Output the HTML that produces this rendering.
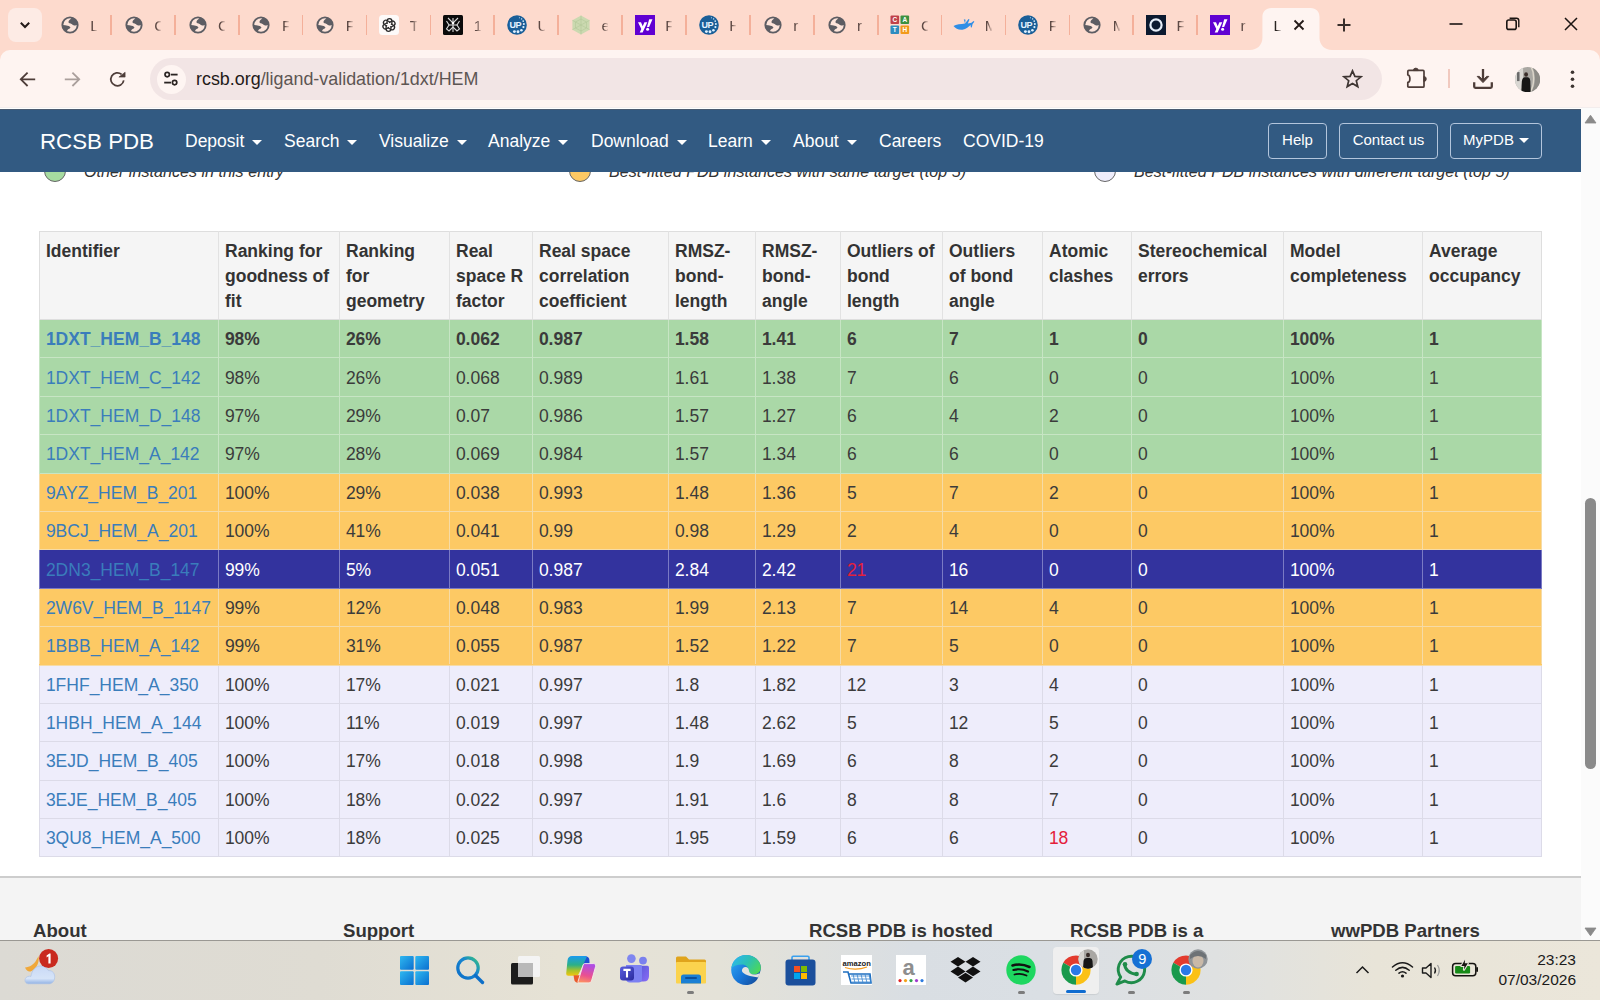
<!DOCTYPE html>
<html><head><meta charset="utf-8">
<style>
*{box-sizing:border-box;margin:0;padding:0}
html,body{width:1600px;height:1000px;overflow:hidden;background:#fff;font-family:"Liberation Sans",sans-serif}
.abs{position:absolute}
#tabbar{position:absolute;left:0;top:0;width:1600px;height:62px;background:#fddacd}
#toolbar{position:absolute;left:0;top:49.5px;width:1600px;height:58.5px;background:#fef4f1;border-radius:10px 10px 0 0}
#page{position:absolute;left:0;top:108px;width:1581px;height:832px;background:#fff;overflow:hidden}
#nav{position:absolute;left:0;top:1px;width:1581px;height:63px;background:#325a82;border-top:1px solid #4a5a70}
#sb{position:absolute;left:1581px;top:108px;width:19px;height:832px;background:#fbfbfb}
#taskbar{position:absolute;left:0;top:940px;width:1600px;height:60px;background:#e9e6df}
.th{position:absolute;font-size:17.5px;line-height:25px;font-weight:bold;color:#333;white-space:nowrap}
.td{position:absolute;font-size:17.5px;line-height:25px;color:#3b3b3b;white-space:nowrap}
.td.lk{color:#3a7dbb}
.td.bold{font-weight:bold}
.td.wt{color:#fff}
.td.red{color:#e4203a}
.tch{position:absolute;top:16.6px;font-size:15.3px;line-height:18px;color:#5e4a45;width:7px;overflow:hidden;white-space:nowrap;-webkit-mask-image:linear-gradient(90deg,#000 0%,#000 35%,rgba(0,0,0,0.15) 100%)}
.nv{position:absolute;top:19.3px;font-size:17.5px;line-height:25px;color:#fff;white-space:nowrap}
.car{display:inline-block;width:0;height:0;border-left:5px solid transparent;border-right:5px solid transparent;border-top:5px solid #fff;vertical-align:middle;margin-left:8px;position:relative;top:-0.5px}
.btn{position:absolute;top:13.2px;height:36px;border:1.5px solid #b3c5dc;border-radius:4px;color:#fff;font-size:15px;line-height:31px;text-align:center;white-space:nowrap}
.leg{position:absolute;font-style:italic;font-size:16.15px;color:#333;white-space:nowrap;line-height:25px}
.dot{position:absolute;width:22px;height:22px;border-radius:50%;border:1px solid #666}
.ft{position:absolute;font-size:18.6px;line-height:22px;font-weight:bold;color:#333;white-space:nowrap}
</style></head><body>
<div id="tabbar"><div class="abs" style="left:8px;top:7.5px;width:34px;height:34.5px;border-radius:8px;background:#fdebe5"></div>
<svg class="abs" style="left:19px;top:19px" width="12" height="12" viewBox="0 0 12 12"><path d="M1.8 3.8 L6 8 L10.2 3.8" fill="none" stroke="#231a18" stroke-width="2"/></svg>
<div class="abs" style="left:59.75px;top:15px;width:20px;height:20px"><svg width="20" height="20" viewBox="0 0 20 20"><defs><clipPath id="gc"><circle cx="10" cy="10" r="7.8"/></clipPath></defs><circle cx="10" cy="10" r="7.6" fill="#fde4da"/><g clip-path="url(#gc)" fill="#5d5d63"><path d="M11.3 0 V3.2 C10 4.4 8.2 6 8.5 7.3 C8.8 8.4 10.4 8.4 11.6 9 C12.6 9.6 13.4 10.5 14.5 10.4 C15.6 10.3 16.4 9.9 18 9.9 H20 V0 Z"/><path d="M0 10.1 H2.7 C4.5 10.2 6.2 10.3 7.6 10.7 C9.2 11.1 10.6 11.8 10.4 12.6 C10.2 13.4 9.3 13.7 8.6 14 C7.6 14.5 7.2 15.3 7 16.4 L6 20 H0 Z"/></g><circle cx="10" cy="10" r="7.65" fill="none" stroke="#5d5d63" stroke-width="1.9"/></svg></div>
<div class="tch" style="left:90.25px">L</div>
<div class="abs" style="left:110.00px;top:15px;width:1.8px;height:19.5px;background:#f4b09a"></div>
<div class="abs" style="left:123.65px;top:15px;width:20px;height:20px"><svg width="20" height="20" viewBox="0 0 20 20"><defs><clipPath id="gc"><circle cx="10" cy="10" r="7.8"/></clipPath></defs><circle cx="10" cy="10" r="7.6" fill="#fde4da"/><g clip-path="url(#gc)" fill="#5d5d63"><path d="M11.3 0 V3.2 C10 4.4 8.2 6 8.5 7.3 C8.8 8.4 10.4 8.4 11.6 9 C12.6 9.6 13.4 10.5 14.5 10.4 C15.6 10.3 16.4 9.9 18 9.9 H20 V0 Z"/><path d="M0 10.1 H2.7 C4.5 10.2 6.2 10.3 7.6 10.7 C9.2 11.1 10.6 11.8 10.4 12.6 C10.2 13.4 9.3 13.7 8.6 14 C7.6 14.5 7.2 15.3 7 16.4 L6 20 H0 Z"/></g><circle cx="10" cy="10" r="7.65" fill="none" stroke="#5d5d63" stroke-width="1.9"/></svg></div>
<div class="tch" style="left:154.15px">C</div>
<div class="abs" style="left:173.90px;top:15px;width:1.8px;height:19.5px;background:#f4b09a"></div>
<div class="abs" style="left:187.55px;top:15px;width:20px;height:20px"><svg width="20" height="20" viewBox="0 0 20 20"><defs><clipPath id="gc"><circle cx="10" cy="10" r="7.8"/></clipPath></defs><circle cx="10" cy="10" r="7.6" fill="#fde4da"/><g clip-path="url(#gc)" fill="#5d5d63"><path d="M11.3 0 V3.2 C10 4.4 8.2 6 8.5 7.3 C8.8 8.4 10.4 8.4 11.6 9 C12.6 9.6 13.4 10.5 14.5 10.4 C15.6 10.3 16.4 9.9 18 9.9 H20 V0 Z"/><path d="M0 10.1 H2.7 C4.5 10.2 6.2 10.3 7.6 10.7 C9.2 11.1 10.6 11.8 10.4 12.6 C10.2 13.4 9.3 13.7 8.6 14 C7.6 14.5 7.2 15.3 7 16.4 L6 20 H0 Z"/></g><circle cx="10" cy="10" r="7.65" fill="none" stroke="#5d5d63" stroke-width="1.9"/></svg></div>
<div class="tch" style="left:218.05px">C</div>
<div class="abs" style="left:237.80px;top:15px;width:1.8px;height:19.5px;background:#f4b09a"></div>
<div class="abs" style="left:251.45px;top:15px;width:20px;height:20px"><svg width="20" height="20" viewBox="0 0 20 20"><defs><clipPath id="gc"><circle cx="10" cy="10" r="7.8"/></clipPath></defs><circle cx="10" cy="10" r="7.6" fill="#fde4da"/><g clip-path="url(#gc)" fill="#5d5d63"><path d="M11.3 0 V3.2 C10 4.4 8.2 6 8.5 7.3 C8.8 8.4 10.4 8.4 11.6 9 C12.6 9.6 13.4 10.5 14.5 10.4 C15.6 10.3 16.4 9.9 18 9.9 H20 V0 Z"/><path d="M0 10.1 H2.7 C4.5 10.2 6.2 10.3 7.6 10.7 C9.2 11.1 10.6 11.8 10.4 12.6 C10.2 13.4 9.3 13.7 8.6 14 C7.6 14.5 7.2 15.3 7 16.4 L6 20 H0 Z"/></g><circle cx="10" cy="10" r="7.65" fill="none" stroke="#5d5d63" stroke-width="1.9"/></svg></div>
<div class="tch" style="left:281.95px">F</div>
<div class="abs" style="left:301.70px;top:15px;width:1.8px;height:19.5px;background:#f4b09a"></div>
<div class="abs" style="left:315.35px;top:15px;width:20px;height:20px"><svg width="20" height="20" viewBox="0 0 20 20"><defs><clipPath id="gc"><circle cx="10" cy="10" r="7.8"/></clipPath></defs><circle cx="10" cy="10" r="7.6" fill="#fde4da"/><g clip-path="url(#gc)" fill="#5d5d63"><path d="M11.3 0 V3.2 C10 4.4 8.2 6 8.5 7.3 C8.8 8.4 10.4 8.4 11.6 9 C12.6 9.6 13.4 10.5 14.5 10.4 C15.6 10.3 16.4 9.9 18 9.9 H20 V0 Z"/><path d="M0 10.1 H2.7 C4.5 10.2 6.2 10.3 7.6 10.7 C9.2 11.1 10.6 11.8 10.4 12.6 C10.2 13.4 9.3 13.7 8.6 14 C7.6 14.5 7.2 15.3 7 16.4 L6 20 H0 Z"/></g><circle cx="10" cy="10" r="7.65" fill="none" stroke="#5d5d63" stroke-width="1.9"/></svg></div>
<div class="tch" style="left:345.85px">F</div>
<div class="abs" style="left:365.60px;top:15px;width:1.8px;height:19.5px;background:#f4b09a"></div>
<div class="abs" style="left:379.25px;top:15px;width:20px;height:20px"><svg width="20" height="20" viewBox="0 0 20 20"><rect x="0" y="0" width="20" height="20" rx="3.5" fill="#fdfaf9"/><g fill="none" stroke="#2a2a2a" stroke-width="1.3"><path d="M8.1 8.9 V6.1 A2.4 2.4 0 0 1 12.9 6.1 V9.6" transform="rotate(0 10 10)"/><path d="M8.1 8.9 V6.1 A2.4 2.4 0 0 1 12.9 6.1 V9.6" transform="rotate(60 10 10)"/><path d="M8.1 8.9 V6.1 A2.4 2.4 0 0 1 12.9 6.1 V9.6" transform="rotate(120 10 10)"/><path d="M8.1 8.9 V6.1 A2.4 2.4 0 0 1 12.9 6.1 V9.6" transform="rotate(180 10 10)"/><path d="M8.1 8.9 V6.1 A2.4 2.4 0 0 1 12.9 6.1 V9.6" transform="rotate(240 10 10)"/><path d="M8.1 8.9 V6.1 A2.4 2.4 0 0 1 12.9 6.1 V9.6" transform="rotate(300 10 10)"/></g></svg></div>
<div class="tch" style="left:409.75px">T</div>
<div class="abs" style="left:429.50px;top:15px;width:1.8px;height:19.5px;background:#f4b09a"></div>
<div class="abs" style="left:443.15px;top:15px;width:20px;height:20px"><svg width="20" height="20" viewBox="0 0 20 20"><rect x="0" y="0" width="20" height="20" rx="1.5" fill="#0b0b0b"/><g stroke="#d8d8d8" stroke-width="1.1" fill="none"><path d="M10 3 V17"/><path d="M5 3 L10 8 L15 3"/><path d="M3.5 6 L6 10 L3.5 14 L6 16 L10 12 L14 16 L16.5 14 L14 10 L16.5 6"/><path d="M6 10 H14"/></g><circle cx="10" cy="8" r="1.3" fill="#fff"/></svg></div>
<div class="tch" style="left:473.65px">1</div>
<div class="abs" style="left:493.40px;top:15px;width:1.8px;height:19.5px;background:#f4b09a"></div>
<div class="abs" style="left:507.05px;top:15px;width:20px;height:20px"><svg width="20" height="20" viewBox="0 0 20 20"><circle cx="10" cy="10" r="9.8" fill="#1a5f98"/><text x="2.4" y="13.2" font-family="Liberation Sans" font-weight="bold" font-size="9" letter-spacing="-0.4" fill="#e6f3ff">UP</text><g fill="#dff0ff"><circle cx="7.4" cy="16.6" r="1.45"/><circle cx="11" cy="16.8" r="1.45"/><circle cx="14.4" cy="15.2" r="1.3"/><circle cx="16.4" cy="12.1" r="1.1"/><circle cx="16.9" cy="9" r="1"/><circle cx="16.2" cy="6.1" r="0.85"/><circle cx="14.6" cy="3.9" r="0.7"/><circle cx="12.4" cy="2.8" r="0.55"/></g></svg></div>
<div class="tch" style="left:537.55px">U</div>
<div class="abs" style="left:557.30px;top:15px;width:1.8px;height:19.5px;background:#f4b09a"></div>
<div class="abs" style="left:570.95px;top:15px;width:20px;height:20px"><svg width="20" height="20" viewBox="0 0 20 20"><polygon points="10,0.6 18.6,5.3 18.6,14.7 10,19.4 1.4,14.7 1.4,5.3" fill="#cbd9b0"/><g stroke="#b4c898" stroke-width="0.6" fill="none"><path d="M1.4 5.3 L18.6 14.7 M18.6 5.3 L1.4 14.7 M10 0.6 V19.4"/><polygon points="10,4 15.5,7 15.5,13 10,16 4.5,13 4.5,7"/></g></svg></div>
<div class="tch" style="left:601.45px">e</div>
<div class="abs" style="left:621.20px;top:15px;width:1.8px;height:19.5px;background:#f4b09a"></div>
<div class="abs" style="left:634.85px;top:15px;width:20px;height:20px"><svg width="20" height="20" viewBox="0 0 20 20"><rect x="0" y="0" width="20" height="20" fill="#6001d2"/><path d="M3 7.2 H6 L7.7 11.3 L9.4 7.2 H12.3 L7.6 17.6 H4.7 L6.3 14.1 Z" fill="#fff"/><path d="M14.2 4.3 H17.5 L14.1 12.1 H12 Z" fill="#fff"/><circle cx="12.6" cy="14.2" r="1.5" fill="#fff"/></svg></div>
<div class="tch" style="left:665.35px">F</div>
<div class="abs" style="left:685.10px;top:15px;width:1.8px;height:19.5px;background:#f4b09a"></div>
<div class="abs" style="left:698.75px;top:15px;width:20px;height:20px"><svg width="20" height="20" viewBox="0 0 20 20"><circle cx="10" cy="10" r="9.8" fill="#1a5f98"/><text x="2.4" y="13.2" font-family="Liberation Sans" font-weight="bold" font-size="9" letter-spacing="-0.4" fill="#e6f3ff">UP</text><g fill="#dff0ff"><circle cx="7.4" cy="16.6" r="1.45"/><circle cx="11" cy="16.8" r="1.45"/><circle cx="14.4" cy="15.2" r="1.3"/><circle cx="16.4" cy="12.1" r="1.1"/><circle cx="16.9" cy="9" r="1"/><circle cx="16.2" cy="6.1" r="0.85"/><circle cx="14.6" cy="3.9" r="0.7"/><circle cx="12.4" cy="2.8" r="0.55"/></g></svg></div>
<div class="tch" style="left:729.25px">H</div>
<div class="abs" style="left:749.00px;top:15px;width:1.8px;height:19.5px;background:#f4b09a"></div>
<div class="abs" style="left:762.65px;top:15px;width:20px;height:20px"><svg width="20" height="20" viewBox="0 0 20 20"><defs><clipPath id="gc"><circle cx="10" cy="10" r="7.8"/></clipPath></defs><circle cx="10" cy="10" r="7.6" fill="#fde4da"/><g clip-path="url(#gc)" fill="#5d5d63"><path d="M11.3 0 V3.2 C10 4.4 8.2 6 8.5 7.3 C8.8 8.4 10.4 8.4 11.6 9 C12.6 9.6 13.4 10.5 14.5 10.4 C15.6 10.3 16.4 9.9 18 9.9 H20 V0 Z"/><path d="M0 10.1 H2.7 C4.5 10.2 6.2 10.3 7.6 10.7 C9.2 11.1 10.6 11.8 10.4 12.6 C10.2 13.4 9.3 13.7 8.6 14 C7.6 14.5 7.2 15.3 7 16.4 L6 20 H0 Z"/></g><circle cx="10" cy="10" r="7.65" fill="none" stroke="#5d5d63" stroke-width="1.9"/></svg></div>
<div class="tch" style="left:793.15px">r</div>
<div class="abs" style="left:812.90px;top:15px;width:1.8px;height:19.5px;background:#f4b09a"></div>
<div class="abs" style="left:826.55px;top:15px;width:20px;height:20px"><svg width="20" height="20" viewBox="0 0 20 20"><defs><clipPath id="gc"><circle cx="10" cy="10" r="7.8"/></clipPath></defs><circle cx="10" cy="10" r="7.6" fill="#fde4da"/><g clip-path="url(#gc)" fill="#5d5d63"><path d="M11.3 0 V3.2 C10 4.4 8.2 6 8.5 7.3 C8.8 8.4 10.4 8.4 11.6 9 C12.6 9.6 13.4 10.5 14.5 10.4 C15.6 10.3 16.4 9.9 18 9.9 H20 V0 Z"/><path d="M0 10.1 H2.7 C4.5 10.2 6.2 10.3 7.6 10.7 C9.2 11.1 10.6 11.8 10.4 12.6 C10.2 13.4 9.3 13.7 8.6 14 C7.6 14.5 7.2 15.3 7 16.4 L6 20 H0 Z"/></g><circle cx="10" cy="10" r="7.65" fill="none" stroke="#5d5d63" stroke-width="1.9"/></svg></div>
<div class="tch" style="left:857.05px">r</div>
<div class="abs" style="left:876.80px;top:15px;width:1.8px;height:19.5px;background:#f4b09a"></div>
<div class="abs" style="left:890.45px;top:15px;width:20px;height:20px"><svg width="20" height="20" viewBox="0 0 20 20"><rect x="0.5" y="0.5" width="8.6" height="8.6" rx="1" fill="#c0414a"/><rect x="10.5" y="0.5" width="8.6" height="8.6" rx="1" fill="#3d9140"/><rect x="0.5" y="10.5" width="8.6" height="8.6" rx="1" fill="#2d8cc0"/><rect x="10.5" y="10.5" width="8.6" height="8.6" rx="1" fill="#f29a1a"/><g font-family="Liberation Sans" font-weight="bold" font-size="6.5" fill="#fff"><text x="2.6" y="7.2">C</text><text x="12.6" y="7.2">A</text><text x="2.8" y="17.2">T</text><text x="12.6" y="17.2">H</text></g></svg></div>
<div class="tch" style="left:920.95px">C</div>
<div class="abs" style="left:940.70px;top:15px;width:1.8px;height:19.5px;background:#f4b09a"></div>
<div class="abs" style="left:952.35px;top:15px;width:24px;height:20px"><svg width="24" height="20" viewBox="0 0 24 20"><path d="M1.5 11 C4 9.5 9 9.2 13 8.6 L16.5 4 L17.5 4.6 L15.8 8.4 L19.5 7.8 L21.5 6 L22.4 6.8 L20.6 9 L19.8 12.5 L18.8 12.2 L18.6 10 C17 11.6 14 14.2 10.5 14.8 C6.5 15.2 3.5 13.6 1.5 11 Z" fill="#2f8ee6"/><path d="M13 8.6 L11.8 4.2 L13.6 4.8 Z" fill="#2f8ee6"/></svg></div>
<div class="tch" style="left:984.85px">M</div>
<div class="abs" style="left:1004.60px;top:15px;width:1.8px;height:19.5px;background:#f4b09a"></div>
<div class="abs" style="left:1018.25px;top:15px;width:20px;height:20px"><svg width="20" height="20" viewBox="0 0 20 20"><circle cx="10" cy="10" r="9.8" fill="#1a5f98"/><text x="2.4" y="13.2" font-family="Liberation Sans" font-weight="bold" font-size="9" letter-spacing="-0.4" fill="#e6f3ff">UP</text><g fill="#dff0ff"><circle cx="7.4" cy="16.6" r="1.45"/><circle cx="11" cy="16.8" r="1.45"/><circle cx="14.4" cy="15.2" r="1.3"/><circle cx="16.4" cy="12.1" r="1.1"/><circle cx="16.9" cy="9" r="1"/><circle cx="16.2" cy="6.1" r="0.85"/><circle cx="14.6" cy="3.9" r="0.7"/><circle cx="12.4" cy="2.8" r="0.55"/></g></svg></div>
<div class="tch" style="left:1048.75px">F</div>
<div class="abs" style="left:1068.50px;top:15px;width:1.8px;height:19.5px;background:#f4b09a"></div>
<div class="abs" style="left:1082.15px;top:15px;width:20px;height:20px"><svg width="20" height="20" viewBox="0 0 20 20"><defs><clipPath id="gc"><circle cx="10" cy="10" r="7.8"/></clipPath></defs><circle cx="10" cy="10" r="7.6" fill="#fde4da"/><g clip-path="url(#gc)" fill="#5d5d63"><path d="M11.3 0 V3.2 C10 4.4 8.2 6 8.5 7.3 C8.8 8.4 10.4 8.4 11.6 9 C12.6 9.6 13.4 10.5 14.5 10.4 C15.6 10.3 16.4 9.9 18 9.9 H20 V0 Z"/><path d="M0 10.1 H2.7 C4.5 10.2 6.2 10.3 7.6 10.7 C9.2 11.1 10.6 11.8 10.4 12.6 C10.2 13.4 9.3 13.7 8.6 14 C7.6 14.5 7.2 15.3 7 16.4 L6 20 H0 Z"/></g><circle cx="10" cy="10" r="7.65" fill="none" stroke="#5d5d63" stroke-width="1.9"/></svg></div>
<div class="tch" style="left:1112.65px">M</div>
<div class="abs" style="left:1132.40px;top:15px;width:1.8px;height:19.5px;background:#f4b09a"></div>
<div class="abs" style="left:1146.05px;top:15px;width:20px;height:20px"><svg width="20" height="20" viewBox="0 0 20 20"><rect x="0" y="0" width="20" height="20" fill="#0c1a30"/><circle cx="10" cy="10" r="5.6" fill="none" stroke="#e6eef8" stroke-width="2.2"/></svg></div>
<div class="tch" style="left:1176.55px">F</div>
<div class="abs" style="left:1196.30px;top:15px;width:1.8px;height:19.5px;background:#f4b09a"></div>
<div class="abs" style="left:1209.95px;top:15px;width:20px;height:20px"><svg width="20" height="20" viewBox="0 0 20 20"><rect x="0" y="0" width="20" height="20" fill="#6001d2"/><path d="M3 7.2 H6 L7.7 11.3 L9.4 7.2 H12.3 L7.6 17.6 H4.7 L6.3 14.1 Z" fill="#fff"/><path d="M14.2 4.3 H17.5 L14.1 12.1 H12 Z" fill="#fff"/><circle cx="12.6" cy="14.2" r="1.5" fill="#fff"/></svg></div>
<div class="tch" style="left:1240.45px">r</div>
<svg class="abs" style="left:1250px;top:8px" width="82" height="42" viewBox="0 0 82 42"><path d="M0 42 C7 42 12.4 37 12.4 30 L12.4 9 C12.4 3.5 15.9 0 21.4 0 L60.5 0 C66 0 69.5 3.5 69.5 9 L69.5 30 C69.5 37 74.9 42 81.9 42 Z" fill="#fef4f1"/></svg>
<div class="tch" style="left:1273.5px;color:#2a2422;opacity:1">L</div>
<svg class="abs" style="left:1293px;top:19px" width="12" height="12" viewBox="0 0 12 12"><path d="M1.5 1.5 L10.5 10.5 M10.5 1.5 L1.5 10.5" stroke="#231a18" stroke-width="1.8"/></svg>
<svg class="abs" style="left:1336px;top:17px" width="16" height="16" viewBox="0 0 16 16"><path d="M8 1.5 V14.5 M1.5 8 H14.5" stroke="#3a2e2b" stroke-width="2"/></svg>
<svg class="abs" style="left:1446px;top:14px" width="20" height="20" viewBox="0 0 20 20"><path d="M3.5 10 H16.5" stroke="#1a1412" stroke-width="1.6"/></svg>
<svg class="abs" style="left:1503px;top:14px" width="20" height="20" viewBox="0 0 20 20"><rect x="3.8" y="6" width="9.4" height="9.4" rx="2" fill="none" stroke="#1a1412" stroke-width="1.6"/><path d="M6.6 4.2 H13.4 Q15.8 4.2 15.8 6.6 V13.2" fill="none" stroke="#1a1412" stroke-width="1.4"/></svg>
<svg class="abs" style="left:1561px;top:14px" width="20" height="20" viewBox="0 0 20 20"><path d="M4 4 L16 16 M16 4 L4 16" stroke="#1a1412" stroke-width="1.5"/></svg></div>
<div id="toolbar"></div>
<div class="abs" style="left:0;top:107px;width:1600px;height:1px;background:#f3eded"></div>
<svg class="abs" style="left:17px;top:69px" width="21" height="21" viewBox="0 0 21 21"><path d="M18.2 10.3 H4.4 M10.6 3.6 L3.8 10.3 L10.6 17" fill="none" stroke="#4e3d39" stroke-width="1.8"/></svg>
<svg class="abs" style="left:62px;top:69px" width="21" height="21" viewBox="0 0 21 21"><path d="M2.8 10.3 H16.6 M10.4 3.6 L17.2 10.3 L10.4 17" fill="none" stroke="#aa9f9c" stroke-width="1.8"/></svg>
<svg class="abs" style="left:107px;top:69px" width="21" height="21" viewBox="0 0 21 21"><path d="M16.75 11.4 A6.5 6.5 0 1 1 14.6 5.4" fill="none" stroke="#4e3d39" stroke-width="1.75"/><path d="M11.9 8.1 L18.1 8.1 L18.1 3.2 Z" fill="#4e3d39" stroke="#4e3d39" stroke-width="0.6" stroke-linejoin="round"/></svg>
<div class="abs" style="left:150px;top:58px;width:1232px;height:41.5px;border-radius:21px;background:#f2e5e5"></div>
<div class="abs" style="left:156.5px;top:64.5px;width:29px;height:29px;border-radius:50%;background:#fef5f2"></div>
<svg class="abs" style="left:161px;top:69px" width="20" height="20" viewBox="0 0 20 20"><circle cx="6.2" cy="5.6" r="2.2" fill="none" stroke="#2a2422" stroke-width="1.7"/><path d="M9.8 5.6 H16.6" stroke="#2a2422" stroke-width="1.8"/><circle cx="13.6" cy="13.6" r="2.2" fill="none" stroke="#2a2422" stroke-width="1.7"/><path d="M3.2 13.6 H10" stroke="#2a2422" stroke-width="1.8"/></svg>
<div class="abs" style="left:196px;top:66px;font-size:17.9px;line-height:26px;color:#5d5553;white-space:nowrap"><span style="color:#1f1a19">rcsb.org</span>/ligand-validation/1dxt/HEM</div>
<svg class="abs" style="left:1342px;top:69px" width="21" height="20" viewBox="0 0 21 20"><path d="M10.5 1.8 L12.9 7.4 L19 7.8 L14.3 11.7 L15.8 17.6 L10.5 14.4 L5.2 17.6 L6.7 11.7 L2 7.8 L8.1 7.4 Z" fill="none" stroke="#3e3532" stroke-width="1.7" stroke-linejoin="miter"/></svg>
<svg class="abs" style="left:1406px;top:67px" width="23" height="23" viewBox="0 0 23 23"><path d="M1.8 4.4 Q1.8 3.4 2.8 3.4 H17 Q18 3.4 18 4.4 V19.2 Q18 20.2 17 20.2 H2.8 Q1.8 20.2 1.8 19.2 V15.4 C4.6 15.2 4.6 8.2 1.8 8 Z" fill="none" stroke="#4e3d39" stroke-width="1.7" stroke-linejoin="round"/><path d="M7.3 3.6 A2.5 2.5 0 0 1 12.3 3.6 Z" fill="#4e3d39" stroke="#4e3d39" stroke-width="0.8"/><path d="M17.8 9.4 A2.5 2.5 0 0 1 17.8 14.4 Z" fill="#4e3d39" stroke="#4e3d39" stroke-width="0.8"/></svg>
<div class="abs" style="left:1448px;top:69px;width:1.5px;height:19px;background:#f1c9bf"></div>
<svg class="abs" style="left:1472px;top:68px" width="22" height="22" viewBox="0 0 22 22"><path d="M11 1 V12" fill="none" stroke="#4e3d39" stroke-width="2.3"/><path d="M5.2 8.4 L11 14.6 L16.8 8.4 L14.6 8.4 L11 12.2 L7.4 8.4 Z" fill="#4e3d39" stroke="#4e3d39" stroke-width="1"/><path d="M2.2 14.2 V18.6 Q2.2 19.8 3.4 19.8 H18.6 Q19.8 19.8 19.8 18.6 V14.2" fill="none" stroke="#4e3d39" stroke-width="2.3"/></svg>
<svg class="abs" style="left:1514.8px;top:66.7px" width="25.2" height="25.2" viewBox="0 0 25 25"><defs><clipPath id="av"><circle cx="12.5" cy="12.5" r="12.5"/></clipPath></defs><g clip-path="url(#av)"><rect width="25" height="25" fill="#a9a7a2"/><rect x="0" y="0" width="8" height="25" fill="#d9d7d3"/><path d="M17 0 C21 6 21 18 16 25 L25 25 L25 0 Z" fill="#8d8b86"/><path d="M16 0 C19.5 6 19.5 18 15 25" fill="none" stroke="#dcd6ca" stroke-width="1.4"/><rect x="2" y="5" width="2.5" height="9" fill="#6a6a6a"/><ellipse cx="11" cy="7.4" rx="1.9" ry="2.2" fill="#3a2e2a"/><path d="M6.2 25 L6.8 14.5 Q7.2 10.5 9.5 10.2 L12.8 10.2 Q15 10.6 15.2 14.5 L15.6 25 Z" fill="#161616"/></g></svg>
<svg class="abs" style="left:1566px;top:69px" width="13" height="21" viewBox="0 0 13 21"><circle cx="6.5" cy="3.2" r="1.8" fill="#3e3532"/><circle cx="6.5" cy="10.3" r="1.8" fill="#3e3532"/><circle cx="6.5" cy="17.3" r="1.8" fill="#3e3532"/></svg>

<div id="page">
<!-- legend (partially under nav) -->
<div class="dot" style="left:44px;top:52px;background:#a6dba0"></div>
<div class="leg" style="left:84px;top:51px">Other instances in this entry</div>
<div class="dot" style="left:569px;top:52px;background:#fdc964"></div>
<div class="leg" style="left:609px;top:51px">Best-fitted PDB instances with same target (top 5)</div>
<div class="dot" style="left:1094px;top:52px;background:#eeedfb"></div>
<div class="leg" style="left:1134px;top:51px">Best-fitted PDB instances with different target (top 5)</div>
<div class="abs" style="left:39px;top:123px;width:1503px;height:89px;background:#f5f5f5;border:1px solid #dedede"></div>
<div class="th" style="left:46.0px;top:130.5px">Identifier</div>
<div class="abs" style="left:218px;top:123px;width:1px;height:88px;background:#e2e2e2"></div>
<div class="th" style="left:225.0px;top:130.5px">Ranking for<br>goodness of<br>fit</div>
<div class="abs" style="left:339px;top:123px;width:1px;height:88px;background:#e2e2e2"></div>
<div class="th" style="left:346.0px;top:130.5px">Ranking<br>for<br>geometry</div>
<div class="abs" style="left:449px;top:123px;width:1px;height:88px;background:#e2e2e2"></div>
<div class="th" style="left:456.0px;top:130.5px">Real<br>space R<br>factor</div>
<div class="abs" style="left:532px;top:123px;width:1px;height:88px;background:#e2e2e2"></div>
<div class="th" style="left:539.0px;top:130.5px">Real space<br>correlation<br>coefficient</div>
<div class="abs" style="left:668px;top:123px;width:1px;height:88px;background:#e2e2e2"></div>
<div class="th" style="left:675.0px;top:130.5px">RMSZ-<br>bond-<br>length</div>
<div class="abs" style="left:755px;top:123px;width:1px;height:88px;background:#e2e2e2"></div>
<div class="th" style="left:762.0px;top:130.5px">RMSZ-<br>bond-<br>angle</div>
<div class="abs" style="left:840px;top:123px;width:1px;height:88px;background:#e2e2e2"></div>
<div class="th" style="left:847.0px;top:130.5px">Outliers of<br>bond<br>length</div>
<div class="abs" style="left:942px;top:123px;width:1px;height:88px;background:#e2e2e2"></div>
<div class="th" style="left:949.0px;top:130.5px">Outliers<br>of bond<br>angle</div>
<div class="abs" style="left:1042px;top:123px;width:1px;height:88px;background:#e2e2e2"></div>
<div class="th" style="left:1049.0px;top:130.5px">Atomic<br>clashes</div>
<div class="abs" style="left:1131px;top:123px;width:1px;height:88px;background:#e2e2e2"></div>
<div class="th" style="left:1138.0px;top:130.5px">Stereochemical<br>errors</div>
<div class="abs" style="left:1283px;top:123px;width:1px;height:88px;background:#e2e2e2"></div>
<div class="th" style="left:1290.0px;top:130.5px">Model<br>completeness</div>
<div class="abs" style="left:1422px;top:123px;width:1px;height:88px;background:#e2e2e2"></div>
<div class="th" style="left:1429.0px;top:130.5px">Average<br>occupancy</div>
<div class="abs" style="left:39px;top:212.00px;width:1503px;height:38.39px;background:#aad8a7"></div>
<div class="abs" style="left:39px;top:249.39px;width:1503px;height:1px;background:#c7e5c4"></div>
<div class="abs" style="left:39px;top:212.00px;width:1px;height:37.39px;background:#c7e5c4"></div>
<div class="abs" style="left:218px;top:212.00px;width:1px;height:37.39px;background:#c7e5c4"></div>
<div class="abs" style="left:339px;top:212.00px;width:1px;height:37.39px;background:#c7e5c4"></div>
<div class="abs" style="left:449px;top:212.00px;width:1px;height:37.39px;background:#c7e5c4"></div>
<div class="abs" style="left:532px;top:212.00px;width:1px;height:37.39px;background:#c7e5c4"></div>
<div class="abs" style="left:668px;top:212.00px;width:1px;height:37.39px;background:#c7e5c4"></div>
<div class="abs" style="left:755px;top:212.00px;width:1px;height:37.39px;background:#c7e5c4"></div>
<div class="abs" style="left:840px;top:212.00px;width:1px;height:37.39px;background:#c7e5c4"></div>
<div class="abs" style="left:942px;top:212.00px;width:1px;height:37.39px;background:#c7e5c4"></div>
<div class="abs" style="left:1042px;top:212.00px;width:1px;height:37.39px;background:#c7e5c4"></div>
<div class="abs" style="left:1131px;top:212.00px;width:1px;height:37.39px;background:#c7e5c4"></div>
<div class="abs" style="left:1283px;top:212.00px;width:1px;height:37.39px;background:#c7e5c4"></div>
<div class="abs" style="left:1422px;top:212.00px;width:1px;height:37.39px;background:#c7e5c4"></div>
<div class="abs" style="left:1541px;top:212.00px;width:1px;height:37.39px;background:#c7e5c4"></div>
<div class="td lk bold" style="left:45.9px;top:219.20px">1DXT_HEM_B_148</div>
<div class="td bold" style="left:224.9px;top:219.20px">98%</div>
<div class="td bold" style="left:345.9px;top:219.20px">26%</div>
<div class="td bold" style="left:455.9px;top:219.20px">0.062</div>
<div class="td bold" style="left:538.9px;top:219.20px">0.987</div>
<div class="td bold" style="left:674.9px;top:219.20px">1.58</div>
<div class="td bold" style="left:761.9px;top:219.20px">1.41</div>
<div class="td bold" style="left:846.9px;top:219.20px">6</div>
<div class="td bold" style="left:948.9px;top:219.20px">7</div>
<div class="td bold" style="left:1048.9px;top:219.20px">1</div>
<div class="td bold" style="left:1137.9px;top:219.20px">0</div>
<div class="td bold" style="left:1289.9px;top:219.20px">100%</div>
<div class="td bold" style="left:1428.9px;top:219.20px">1</div>
<div class="abs" style="left:39px;top:250.39px;width:1503px;height:38.39px;background:#aad8a7"></div>
<div class="abs" style="left:39px;top:287.78px;width:1503px;height:1px;background:#c7e5c4"></div>
<div class="abs" style="left:39px;top:250.39px;width:1px;height:37.39px;background:#c7e5c4"></div>
<div class="abs" style="left:218px;top:250.39px;width:1px;height:37.39px;background:#c7e5c4"></div>
<div class="abs" style="left:339px;top:250.39px;width:1px;height:37.39px;background:#c7e5c4"></div>
<div class="abs" style="left:449px;top:250.39px;width:1px;height:37.39px;background:#c7e5c4"></div>
<div class="abs" style="left:532px;top:250.39px;width:1px;height:37.39px;background:#c7e5c4"></div>
<div class="abs" style="left:668px;top:250.39px;width:1px;height:37.39px;background:#c7e5c4"></div>
<div class="abs" style="left:755px;top:250.39px;width:1px;height:37.39px;background:#c7e5c4"></div>
<div class="abs" style="left:840px;top:250.39px;width:1px;height:37.39px;background:#c7e5c4"></div>
<div class="abs" style="left:942px;top:250.39px;width:1px;height:37.39px;background:#c7e5c4"></div>
<div class="abs" style="left:1042px;top:250.39px;width:1px;height:37.39px;background:#c7e5c4"></div>
<div class="abs" style="left:1131px;top:250.39px;width:1px;height:37.39px;background:#c7e5c4"></div>
<div class="abs" style="left:1283px;top:250.39px;width:1px;height:37.39px;background:#c7e5c4"></div>
<div class="abs" style="left:1422px;top:250.39px;width:1px;height:37.39px;background:#c7e5c4"></div>
<div class="abs" style="left:1541px;top:250.39px;width:1px;height:37.39px;background:#c7e5c4"></div>
<div class="td lk" style="left:45.9px;top:257.59px">1DXT_HEM_C_142</div>
<div class="td" style="left:224.9px;top:257.59px">98%</div>
<div class="td" style="left:345.9px;top:257.59px">26%</div>
<div class="td" style="left:455.9px;top:257.59px">0.068</div>
<div class="td" style="left:538.9px;top:257.59px">0.989</div>
<div class="td" style="left:674.9px;top:257.59px">1.61</div>
<div class="td" style="left:761.9px;top:257.59px">1.38</div>
<div class="td" style="left:846.9px;top:257.59px">7</div>
<div class="td" style="left:948.9px;top:257.59px">6</div>
<div class="td" style="left:1048.9px;top:257.59px">0</div>
<div class="td" style="left:1137.9px;top:257.59px">0</div>
<div class="td" style="left:1289.9px;top:257.59px">100%</div>
<div class="td" style="left:1428.9px;top:257.59px">1</div>
<div class="abs" style="left:39px;top:288.78px;width:1503px;height:38.39px;background:#aad8a7"></div>
<div class="abs" style="left:39px;top:326.17px;width:1503px;height:1px;background:#c7e5c4"></div>
<div class="abs" style="left:39px;top:288.78px;width:1px;height:37.39px;background:#c7e5c4"></div>
<div class="abs" style="left:218px;top:288.78px;width:1px;height:37.39px;background:#c7e5c4"></div>
<div class="abs" style="left:339px;top:288.78px;width:1px;height:37.39px;background:#c7e5c4"></div>
<div class="abs" style="left:449px;top:288.78px;width:1px;height:37.39px;background:#c7e5c4"></div>
<div class="abs" style="left:532px;top:288.78px;width:1px;height:37.39px;background:#c7e5c4"></div>
<div class="abs" style="left:668px;top:288.78px;width:1px;height:37.39px;background:#c7e5c4"></div>
<div class="abs" style="left:755px;top:288.78px;width:1px;height:37.39px;background:#c7e5c4"></div>
<div class="abs" style="left:840px;top:288.78px;width:1px;height:37.39px;background:#c7e5c4"></div>
<div class="abs" style="left:942px;top:288.78px;width:1px;height:37.39px;background:#c7e5c4"></div>
<div class="abs" style="left:1042px;top:288.78px;width:1px;height:37.39px;background:#c7e5c4"></div>
<div class="abs" style="left:1131px;top:288.78px;width:1px;height:37.39px;background:#c7e5c4"></div>
<div class="abs" style="left:1283px;top:288.78px;width:1px;height:37.39px;background:#c7e5c4"></div>
<div class="abs" style="left:1422px;top:288.78px;width:1px;height:37.39px;background:#c7e5c4"></div>
<div class="abs" style="left:1541px;top:288.78px;width:1px;height:37.39px;background:#c7e5c4"></div>
<div class="td lk" style="left:45.9px;top:295.98px">1DXT_HEM_D_148</div>
<div class="td" style="left:224.9px;top:295.98px">97%</div>
<div class="td" style="left:345.9px;top:295.98px">29%</div>
<div class="td" style="left:455.9px;top:295.98px">0.07</div>
<div class="td" style="left:538.9px;top:295.98px">0.986</div>
<div class="td" style="left:674.9px;top:295.98px">1.57</div>
<div class="td" style="left:761.9px;top:295.98px">1.27</div>
<div class="td" style="left:846.9px;top:295.98px">6</div>
<div class="td" style="left:948.9px;top:295.98px">4</div>
<div class="td" style="left:1048.9px;top:295.98px">2</div>
<div class="td" style="left:1137.9px;top:295.98px">0</div>
<div class="td" style="left:1289.9px;top:295.98px">100%</div>
<div class="td" style="left:1428.9px;top:295.98px">1</div>
<div class="abs" style="left:39px;top:327.17px;width:1503px;height:38.39px;background:#aad8a7"></div>
<div class="abs" style="left:39px;top:364.56px;width:1503px;height:1px;background:#c7e5c4"></div>
<div class="abs" style="left:39px;top:327.17px;width:1px;height:37.39px;background:#c7e5c4"></div>
<div class="abs" style="left:218px;top:327.17px;width:1px;height:37.39px;background:#c7e5c4"></div>
<div class="abs" style="left:339px;top:327.17px;width:1px;height:37.39px;background:#c7e5c4"></div>
<div class="abs" style="left:449px;top:327.17px;width:1px;height:37.39px;background:#c7e5c4"></div>
<div class="abs" style="left:532px;top:327.17px;width:1px;height:37.39px;background:#c7e5c4"></div>
<div class="abs" style="left:668px;top:327.17px;width:1px;height:37.39px;background:#c7e5c4"></div>
<div class="abs" style="left:755px;top:327.17px;width:1px;height:37.39px;background:#c7e5c4"></div>
<div class="abs" style="left:840px;top:327.17px;width:1px;height:37.39px;background:#c7e5c4"></div>
<div class="abs" style="left:942px;top:327.17px;width:1px;height:37.39px;background:#c7e5c4"></div>
<div class="abs" style="left:1042px;top:327.17px;width:1px;height:37.39px;background:#c7e5c4"></div>
<div class="abs" style="left:1131px;top:327.17px;width:1px;height:37.39px;background:#c7e5c4"></div>
<div class="abs" style="left:1283px;top:327.17px;width:1px;height:37.39px;background:#c7e5c4"></div>
<div class="abs" style="left:1422px;top:327.17px;width:1px;height:37.39px;background:#c7e5c4"></div>
<div class="abs" style="left:1541px;top:327.17px;width:1px;height:37.39px;background:#c7e5c4"></div>
<div class="td lk" style="left:45.9px;top:334.37px">1DXT_HEM_A_142</div>
<div class="td" style="left:224.9px;top:334.37px">97%</div>
<div class="td" style="left:345.9px;top:334.37px">28%</div>
<div class="td" style="left:455.9px;top:334.37px">0.069</div>
<div class="td" style="left:538.9px;top:334.37px">0.984</div>
<div class="td" style="left:674.9px;top:334.37px">1.57</div>
<div class="td" style="left:761.9px;top:334.37px">1.34</div>
<div class="td" style="left:846.9px;top:334.37px">6</div>
<div class="td" style="left:948.9px;top:334.37px">6</div>
<div class="td" style="left:1048.9px;top:334.37px">0</div>
<div class="td" style="left:1137.9px;top:334.37px">0</div>
<div class="td" style="left:1289.9px;top:334.37px">100%</div>
<div class="td" style="left:1428.9px;top:334.37px">1</div>
<div class="abs" style="left:39px;top:365.56px;width:1503px;height:38.39px;background:#fdc964"></div>
<div class="abs" style="left:39px;top:402.95px;width:1503px;height:1px;background:#f6dba6"></div>
<div class="abs" style="left:39px;top:365.56px;width:1px;height:37.39px;background:#f6dba6"></div>
<div class="abs" style="left:218px;top:365.56px;width:1px;height:37.39px;background:#f6dba6"></div>
<div class="abs" style="left:339px;top:365.56px;width:1px;height:37.39px;background:#f6dba6"></div>
<div class="abs" style="left:449px;top:365.56px;width:1px;height:37.39px;background:#f6dba6"></div>
<div class="abs" style="left:532px;top:365.56px;width:1px;height:37.39px;background:#f6dba6"></div>
<div class="abs" style="left:668px;top:365.56px;width:1px;height:37.39px;background:#f6dba6"></div>
<div class="abs" style="left:755px;top:365.56px;width:1px;height:37.39px;background:#f6dba6"></div>
<div class="abs" style="left:840px;top:365.56px;width:1px;height:37.39px;background:#f6dba6"></div>
<div class="abs" style="left:942px;top:365.56px;width:1px;height:37.39px;background:#f6dba6"></div>
<div class="abs" style="left:1042px;top:365.56px;width:1px;height:37.39px;background:#f6dba6"></div>
<div class="abs" style="left:1131px;top:365.56px;width:1px;height:37.39px;background:#f6dba6"></div>
<div class="abs" style="left:1283px;top:365.56px;width:1px;height:37.39px;background:#f6dba6"></div>
<div class="abs" style="left:1422px;top:365.56px;width:1px;height:37.39px;background:#f6dba6"></div>
<div class="abs" style="left:1541px;top:365.56px;width:1px;height:37.39px;background:#f6dba6"></div>
<div class="td lk" style="left:45.9px;top:372.76px">9AYZ_HEM_B_201</div>
<div class="td" style="left:224.9px;top:372.76px">100%</div>
<div class="td" style="left:345.9px;top:372.76px">29%</div>
<div class="td" style="left:455.9px;top:372.76px">0.038</div>
<div class="td" style="left:538.9px;top:372.76px">0.993</div>
<div class="td" style="left:674.9px;top:372.76px">1.48</div>
<div class="td" style="left:761.9px;top:372.76px">1.36</div>
<div class="td" style="left:846.9px;top:372.76px">5</div>
<div class="td" style="left:948.9px;top:372.76px">7</div>
<div class="td" style="left:1048.9px;top:372.76px">2</div>
<div class="td" style="left:1137.9px;top:372.76px">0</div>
<div class="td" style="left:1289.9px;top:372.76px">100%</div>
<div class="td" style="left:1428.9px;top:372.76px">1</div>
<div class="abs" style="left:39px;top:403.95px;width:1503px;height:38.39px;background:#fdc964"></div>
<div class="abs" style="left:39px;top:441.34px;width:1503px;height:1px;background:#f6dba6"></div>
<div class="abs" style="left:39px;top:403.95px;width:1px;height:37.39px;background:#f6dba6"></div>
<div class="abs" style="left:218px;top:403.95px;width:1px;height:37.39px;background:#f6dba6"></div>
<div class="abs" style="left:339px;top:403.95px;width:1px;height:37.39px;background:#f6dba6"></div>
<div class="abs" style="left:449px;top:403.95px;width:1px;height:37.39px;background:#f6dba6"></div>
<div class="abs" style="left:532px;top:403.95px;width:1px;height:37.39px;background:#f6dba6"></div>
<div class="abs" style="left:668px;top:403.95px;width:1px;height:37.39px;background:#f6dba6"></div>
<div class="abs" style="left:755px;top:403.95px;width:1px;height:37.39px;background:#f6dba6"></div>
<div class="abs" style="left:840px;top:403.95px;width:1px;height:37.39px;background:#f6dba6"></div>
<div class="abs" style="left:942px;top:403.95px;width:1px;height:37.39px;background:#f6dba6"></div>
<div class="abs" style="left:1042px;top:403.95px;width:1px;height:37.39px;background:#f6dba6"></div>
<div class="abs" style="left:1131px;top:403.95px;width:1px;height:37.39px;background:#f6dba6"></div>
<div class="abs" style="left:1283px;top:403.95px;width:1px;height:37.39px;background:#f6dba6"></div>
<div class="abs" style="left:1422px;top:403.95px;width:1px;height:37.39px;background:#f6dba6"></div>
<div class="abs" style="left:1541px;top:403.95px;width:1px;height:37.39px;background:#f6dba6"></div>
<div class="td lk" style="left:45.9px;top:411.15px">9BCJ_HEM_A_201</div>
<div class="td" style="left:224.9px;top:411.15px">100%</div>
<div class="td" style="left:345.9px;top:411.15px">41%</div>
<div class="td" style="left:455.9px;top:411.15px">0.041</div>
<div class="td" style="left:538.9px;top:411.15px">0.99</div>
<div class="td" style="left:674.9px;top:411.15px">0.98</div>
<div class="td" style="left:761.9px;top:411.15px">1.29</div>
<div class="td" style="left:846.9px;top:411.15px">2</div>
<div class="td" style="left:948.9px;top:411.15px">4</div>
<div class="td" style="left:1048.9px;top:411.15px">0</div>
<div class="td" style="left:1137.9px;top:411.15px">0</div>
<div class="td" style="left:1289.9px;top:411.15px">100%</div>
<div class="td" style="left:1428.9px;top:411.15px">1</div>
<div class="abs" style="left:39px;top:442.34px;width:1503px;height:38.39px;background:#33339e"></div>
<div class="abs" style="left:39px;top:479.73px;width:1503px;height:1px;background:#7a7ac4"></div>
<div class="abs" style="left:39px;top:442.34px;width:1px;height:37.39px;background:#7a7ac4"></div>
<div class="abs" style="left:218px;top:442.34px;width:1px;height:37.39px;background:#7a7ac4"></div>
<div class="abs" style="left:339px;top:442.34px;width:1px;height:37.39px;background:#7a7ac4"></div>
<div class="abs" style="left:449px;top:442.34px;width:1px;height:37.39px;background:#7a7ac4"></div>
<div class="abs" style="left:532px;top:442.34px;width:1px;height:37.39px;background:#7a7ac4"></div>
<div class="abs" style="left:668px;top:442.34px;width:1px;height:37.39px;background:#7a7ac4"></div>
<div class="abs" style="left:755px;top:442.34px;width:1px;height:37.39px;background:#7a7ac4"></div>
<div class="abs" style="left:840px;top:442.34px;width:1px;height:37.39px;background:#7a7ac4"></div>
<div class="abs" style="left:942px;top:442.34px;width:1px;height:37.39px;background:#7a7ac4"></div>
<div class="abs" style="left:1042px;top:442.34px;width:1px;height:37.39px;background:#7a7ac4"></div>
<div class="abs" style="left:1131px;top:442.34px;width:1px;height:37.39px;background:#7a7ac4"></div>
<div class="abs" style="left:1283px;top:442.34px;width:1px;height:37.39px;background:#7a7ac4"></div>
<div class="abs" style="left:1422px;top:442.34px;width:1px;height:37.39px;background:#7a7ac4"></div>
<div class="abs" style="left:1541px;top:442.34px;width:1px;height:37.39px;background:#7a7ac4"></div>
<div class="td lk" style="left:45.9px;top:449.54px">2DN3_HEM_B_147</div>
<div class="td wt" style="left:224.9px;top:449.54px">99%</div>
<div class="td wt" style="left:345.9px;top:449.54px">5%</div>
<div class="td wt" style="left:455.9px;top:449.54px">0.051</div>
<div class="td wt" style="left:538.9px;top:449.54px">0.987</div>
<div class="td wt" style="left:674.9px;top:449.54px">2.84</div>
<div class="td wt" style="left:761.9px;top:449.54px">2.42</div>
<div class="td wt red" style="left:846.9px;top:449.54px">21</div>
<div class="td wt" style="left:948.9px;top:449.54px">16</div>
<div class="td wt" style="left:1048.9px;top:449.54px">0</div>
<div class="td wt" style="left:1137.9px;top:449.54px">0</div>
<div class="td wt" style="left:1289.9px;top:449.54px">100%</div>
<div class="td wt" style="left:1428.9px;top:449.54px">1</div>
<div class="abs" style="left:39px;top:480.73px;width:1503px;height:38.39px;background:#fdc964"></div>
<div class="abs" style="left:39px;top:518.12px;width:1503px;height:1px;background:#f6dba6"></div>
<div class="abs" style="left:39px;top:480.73px;width:1px;height:37.39px;background:#f6dba6"></div>
<div class="abs" style="left:218px;top:480.73px;width:1px;height:37.39px;background:#f6dba6"></div>
<div class="abs" style="left:339px;top:480.73px;width:1px;height:37.39px;background:#f6dba6"></div>
<div class="abs" style="left:449px;top:480.73px;width:1px;height:37.39px;background:#f6dba6"></div>
<div class="abs" style="left:532px;top:480.73px;width:1px;height:37.39px;background:#f6dba6"></div>
<div class="abs" style="left:668px;top:480.73px;width:1px;height:37.39px;background:#f6dba6"></div>
<div class="abs" style="left:755px;top:480.73px;width:1px;height:37.39px;background:#f6dba6"></div>
<div class="abs" style="left:840px;top:480.73px;width:1px;height:37.39px;background:#f6dba6"></div>
<div class="abs" style="left:942px;top:480.73px;width:1px;height:37.39px;background:#f6dba6"></div>
<div class="abs" style="left:1042px;top:480.73px;width:1px;height:37.39px;background:#f6dba6"></div>
<div class="abs" style="left:1131px;top:480.73px;width:1px;height:37.39px;background:#f6dba6"></div>
<div class="abs" style="left:1283px;top:480.73px;width:1px;height:37.39px;background:#f6dba6"></div>
<div class="abs" style="left:1422px;top:480.73px;width:1px;height:37.39px;background:#f6dba6"></div>
<div class="abs" style="left:1541px;top:480.73px;width:1px;height:37.39px;background:#f6dba6"></div>
<div class="td lk" style="left:45.9px;top:487.93px">2W6V_HEM_B_1147</div>
<div class="td" style="left:224.9px;top:487.93px">99%</div>
<div class="td" style="left:345.9px;top:487.93px">12%</div>
<div class="td" style="left:455.9px;top:487.93px">0.048</div>
<div class="td" style="left:538.9px;top:487.93px">0.983</div>
<div class="td" style="left:674.9px;top:487.93px">1.99</div>
<div class="td" style="left:761.9px;top:487.93px">2.13</div>
<div class="td" style="left:846.9px;top:487.93px">7</div>
<div class="td" style="left:948.9px;top:487.93px">14</div>
<div class="td" style="left:1048.9px;top:487.93px">4</div>
<div class="td" style="left:1137.9px;top:487.93px">0</div>
<div class="td" style="left:1289.9px;top:487.93px">100%</div>
<div class="td" style="left:1428.9px;top:487.93px">1</div>
<div class="abs" style="left:39px;top:519.12px;width:1503px;height:38.39px;background:#fdc964"></div>
<div class="abs" style="left:39px;top:556.51px;width:1503px;height:1px;background:#f6dba6"></div>
<div class="abs" style="left:39px;top:519.12px;width:1px;height:37.39px;background:#f6dba6"></div>
<div class="abs" style="left:218px;top:519.12px;width:1px;height:37.39px;background:#f6dba6"></div>
<div class="abs" style="left:339px;top:519.12px;width:1px;height:37.39px;background:#f6dba6"></div>
<div class="abs" style="left:449px;top:519.12px;width:1px;height:37.39px;background:#f6dba6"></div>
<div class="abs" style="left:532px;top:519.12px;width:1px;height:37.39px;background:#f6dba6"></div>
<div class="abs" style="left:668px;top:519.12px;width:1px;height:37.39px;background:#f6dba6"></div>
<div class="abs" style="left:755px;top:519.12px;width:1px;height:37.39px;background:#f6dba6"></div>
<div class="abs" style="left:840px;top:519.12px;width:1px;height:37.39px;background:#f6dba6"></div>
<div class="abs" style="left:942px;top:519.12px;width:1px;height:37.39px;background:#f6dba6"></div>
<div class="abs" style="left:1042px;top:519.12px;width:1px;height:37.39px;background:#f6dba6"></div>
<div class="abs" style="left:1131px;top:519.12px;width:1px;height:37.39px;background:#f6dba6"></div>
<div class="abs" style="left:1283px;top:519.12px;width:1px;height:37.39px;background:#f6dba6"></div>
<div class="abs" style="left:1422px;top:519.12px;width:1px;height:37.39px;background:#f6dba6"></div>
<div class="abs" style="left:1541px;top:519.12px;width:1px;height:37.39px;background:#f6dba6"></div>
<div class="td lk" style="left:45.9px;top:526.32px">1BBB_HEM_A_142</div>
<div class="td" style="left:224.9px;top:526.32px">99%</div>
<div class="td" style="left:345.9px;top:526.32px">31%</div>
<div class="td" style="left:455.9px;top:526.32px">0.055</div>
<div class="td" style="left:538.9px;top:526.32px">0.987</div>
<div class="td" style="left:674.9px;top:526.32px">1.52</div>
<div class="td" style="left:761.9px;top:526.32px">1.22</div>
<div class="td" style="left:846.9px;top:526.32px">7</div>
<div class="td" style="left:948.9px;top:526.32px">5</div>
<div class="td" style="left:1048.9px;top:526.32px">0</div>
<div class="td" style="left:1137.9px;top:526.32px">0</div>
<div class="td" style="left:1289.9px;top:526.32px">100%</div>
<div class="td" style="left:1428.9px;top:526.32px">1</div>
<div class="abs" style="left:39px;top:557.51px;width:1503px;height:38.39px;background:#eeedfb"></div>
<div class="abs" style="left:39px;top:594.90px;width:1503px;height:1px;background:#dcdbe8"></div>
<div class="abs" style="left:39px;top:557.51px;width:1px;height:37.39px;background:#dcdbe8"></div>
<div class="abs" style="left:218px;top:557.51px;width:1px;height:37.39px;background:#dcdbe8"></div>
<div class="abs" style="left:339px;top:557.51px;width:1px;height:37.39px;background:#dcdbe8"></div>
<div class="abs" style="left:449px;top:557.51px;width:1px;height:37.39px;background:#dcdbe8"></div>
<div class="abs" style="left:532px;top:557.51px;width:1px;height:37.39px;background:#dcdbe8"></div>
<div class="abs" style="left:668px;top:557.51px;width:1px;height:37.39px;background:#dcdbe8"></div>
<div class="abs" style="left:755px;top:557.51px;width:1px;height:37.39px;background:#dcdbe8"></div>
<div class="abs" style="left:840px;top:557.51px;width:1px;height:37.39px;background:#dcdbe8"></div>
<div class="abs" style="left:942px;top:557.51px;width:1px;height:37.39px;background:#dcdbe8"></div>
<div class="abs" style="left:1042px;top:557.51px;width:1px;height:37.39px;background:#dcdbe8"></div>
<div class="abs" style="left:1131px;top:557.51px;width:1px;height:37.39px;background:#dcdbe8"></div>
<div class="abs" style="left:1283px;top:557.51px;width:1px;height:37.39px;background:#dcdbe8"></div>
<div class="abs" style="left:1422px;top:557.51px;width:1px;height:37.39px;background:#dcdbe8"></div>
<div class="abs" style="left:1541px;top:557.51px;width:1px;height:37.39px;background:#dcdbe8"></div>
<div class="td lk" style="left:45.9px;top:564.71px">1FHF_HEM_A_350</div>
<div class="td" style="left:224.9px;top:564.71px">100%</div>
<div class="td" style="left:345.9px;top:564.71px">17%</div>
<div class="td" style="left:455.9px;top:564.71px">0.021</div>
<div class="td" style="left:538.9px;top:564.71px">0.997</div>
<div class="td" style="left:674.9px;top:564.71px">1.8</div>
<div class="td" style="left:761.9px;top:564.71px">1.82</div>
<div class="td" style="left:846.9px;top:564.71px">12</div>
<div class="td" style="left:948.9px;top:564.71px">3</div>
<div class="td" style="left:1048.9px;top:564.71px">4</div>
<div class="td" style="left:1137.9px;top:564.71px">0</div>
<div class="td" style="left:1289.9px;top:564.71px">100%</div>
<div class="td" style="left:1428.9px;top:564.71px">1</div>
<div class="abs" style="left:39px;top:595.90px;width:1503px;height:38.39px;background:#eeedfb"></div>
<div class="abs" style="left:39px;top:633.29px;width:1503px;height:1px;background:#dcdbe8"></div>
<div class="abs" style="left:39px;top:595.90px;width:1px;height:37.39px;background:#dcdbe8"></div>
<div class="abs" style="left:218px;top:595.90px;width:1px;height:37.39px;background:#dcdbe8"></div>
<div class="abs" style="left:339px;top:595.90px;width:1px;height:37.39px;background:#dcdbe8"></div>
<div class="abs" style="left:449px;top:595.90px;width:1px;height:37.39px;background:#dcdbe8"></div>
<div class="abs" style="left:532px;top:595.90px;width:1px;height:37.39px;background:#dcdbe8"></div>
<div class="abs" style="left:668px;top:595.90px;width:1px;height:37.39px;background:#dcdbe8"></div>
<div class="abs" style="left:755px;top:595.90px;width:1px;height:37.39px;background:#dcdbe8"></div>
<div class="abs" style="left:840px;top:595.90px;width:1px;height:37.39px;background:#dcdbe8"></div>
<div class="abs" style="left:942px;top:595.90px;width:1px;height:37.39px;background:#dcdbe8"></div>
<div class="abs" style="left:1042px;top:595.90px;width:1px;height:37.39px;background:#dcdbe8"></div>
<div class="abs" style="left:1131px;top:595.90px;width:1px;height:37.39px;background:#dcdbe8"></div>
<div class="abs" style="left:1283px;top:595.90px;width:1px;height:37.39px;background:#dcdbe8"></div>
<div class="abs" style="left:1422px;top:595.90px;width:1px;height:37.39px;background:#dcdbe8"></div>
<div class="abs" style="left:1541px;top:595.90px;width:1px;height:37.39px;background:#dcdbe8"></div>
<div class="td lk" style="left:45.9px;top:603.10px">1HBH_HEM_A_144</div>
<div class="td" style="left:224.9px;top:603.10px">100%</div>
<div class="td" style="left:345.9px;top:603.10px">11%</div>
<div class="td" style="left:455.9px;top:603.10px">0.019</div>
<div class="td" style="left:538.9px;top:603.10px">0.997</div>
<div class="td" style="left:674.9px;top:603.10px">1.48</div>
<div class="td" style="left:761.9px;top:603.10px">2.62</div>
<div class="td" style="left:846.9px;top:603.10px">5</div>
<div class="td" style="left:948.9px;top:603.10px">12</div>
<div class="td" style="left:1048.9px;top:603.10px">5</div>
<div class="td" style="left:1137.9px;top:603.10px">0</div>
<div class="td" style="left:1289.9px;top:603.10px">100%</div>
<div class="td" style="left:1428.9px;top:603.10px">1</div>
<div class="abs" style="left:39px;top:634.29px;width:1503px;height:38.39px;background:#eeedfb"></div>
<div class="abs" style="left:39px;top:671.68px;width:1503px;height:1px;background:#dcdbe8"></div>
<div class="abs" style="left:39px;top:634.29px;width:1px;height:37.39px;background:#dcdbe8"></div>
<div class="abs" style="left:218px;top:634.29px;width:1px;height:37.39px;background:#dcdbe8"></div>
<div class="abs" style="left:339px;top:634.29px;width:1px;height:37.39px;background:#dcdbe8"></div>
<div class="abs" style="left:449px;top:634.29px;width:1px;height:37.39px;background:#dcdbe8"></div>
<div class="abs" style="left:532px;top:634.29px;width:1px;height:37.39px;background:#dcdbe8"></div>
<div class="abs" style="left:668px;top:634.29px;width:1px;height:37.39px;background:#dcdbe8"></div>
<div class="abs" style="left:755px;top:634.29px;width:1px;height:37.39px;background:#dcdbe8"></div>
<div class="abs" style="left:840px;top:634.29px;width:1px;height:37.39px;background:#dcdbe8"></div>
<div class="abs" style="left:942px;top:634.29px;width:1px;height:37.39px;background:#dcdbe8"></div>
<div class="abs" style="left:1042px;top:634.29px;width:1px;height:37.39px;background:#dcdbe8"></div>
<div class="abs" style="left:1131px;top:634.29px;width:1px;height:37.39px;background:#dcdbe8"></div>
<div class="abs" style="left:1283px;top:634.29px;width:1px;height:37.39px;background:#dcdbe8"></div>
<div class="abs" style="left:1422px;top:634.29px;width:1px;height:37.39px;background:#dcdbe8"></div>
<div class="abs" style="left:1541px;top:634.29px;width:1px;height:37.39px;background:#dcdbe8"></div>
<div class="td lk" style="left:45.9px;top:641.49px">3EJD_HEM_B_405</div>
<div class="td" style="left:224.9px;top:641.49px">100%</div>
<div class="td" style="left:345.9px;top:641.49px">17%</div>
<div class="td" style="left:455.9px;top:641.49px">0.018</div>
<div class="td" style="left:538.9px;top:641.49px">0.998</div>
<div class="td" style="left:674.9px;top:641.49px">1.9</div>
<div class="td" style="left:761.9px;top:641.49px">1.69</div>
<div class="td" style="left:846.9px;top:641.49px">6</div>
<div class="td" style="left:948.9px;top:641.49px">8</div>
<div class="td" style="left:1048.9px;top:641.49px">2</div>
<div class="td" style="left:1137.9px;top:641.49px">0</div>
<div class="td" style="left:1289.9px;top:641.49px">100%</div>
<div class="td" style="left:1428.9px;top:641.49px">1</div>
<div class="abs" style="left:39px;top:672.68px;width:1503px;height:38.39px;background:#eeedfb"></div>
<div class="abs" style="left:39px;top:710.07px;width:1503px;height:1px;background:#dcdbe8"></div>
<div class="abs" style="left:39px;top:672.68px;width:1px;height:37.39px;background:#dcdbe8"></div>
<div class="abs" style="left:218px;top:672.68px;width:1px;height:37.39px;background:#dcdbe8"></div>
<div class="abs" style="left:339px;top:672.68px;width:1px;height:37.39px;background:#dcdbe8"></div>
<div class="abs" style="left:449px;top:672.68px;width:1px;height:37.39px;background:#dcdbe8"></div>
<div class="abs" style="left:532px;top:672.68px;width:1px;height:37.39px;background:#dcdbe8"></div>
<div class="abs" style="left:668px;top:672.68px;width:1px;height:37.39px;background:#dcdbe8"></div>
<div class="abs" style="left:755px;top:672.68px;width:1px;height:37.39px;background:#dcdbe8"></div>
<div class="abs" style="left:840px;top:672.68px;width:1px;height:37.39px;background:#dcdbe8"></div>
<div class="abs" style="left:942px;top:672.68px;width:1px;height:37.39px;background:#dcdbe8"></div>
<div class="abs" style="left:1042px;top:672.68px;width:1px;height:37.39px;background:#dcdbe8"></div>
<div class="abs" style="left:1131px;top:672.68px;width:1px;height:37.39px;background:#dcdbe8"></div>
<div class="abs" style="left:1283px;top:672.68px;width:1px;height:37.39px;background:#dcdbe8"></div>
<div class="abs" style="left:1422px;top:672.68px;width:1px;height:37.39px;background:#dcdbe8"></div>
<div class="abs" style="left:1541px;top:672.68px;width:1px;height:37.39px;background:#dcdbe8"></div>
<div class="td lk" style="left:45.9px;top:679.88px">3EJE_HEM_B_405</div>
<div class="td" style="left:224.9px;top:679.88px">100%</div>
<div class="td" style="left:345.9px;top:679.88px">18%</div>
<div class="td" style="left:455.9px;top:679.88px">0.022</div>
<div class="td" style="left:538.9px;top:679.88px">0.997</div>
<div class="td" style="left:674.9px;top:679.88px">1.91</div>
<div class="td" style="left:761.9px;top:679.88px">1.6</div>
<div class="td" style="left:846.9px;top:679.88px">8</div>
<div class="td" style="left:948.9px;top:679.88px">8</div>
<div class="td" style="left:1048.9px;top:679.88px">7</div>
<div class="td" style="left:1137.9px;top:679.88px">0</div>
<div class="td" style="left:1289.9px;top:679.88px">100%</div>
<div class="td" style="left:1428.9px;top:679.88px">1</div>
<div class="abs" style="left:39px;top:711.07px;width:1503px;height:38.39px;background:#eeedfb"></div>
<div class="abs" style="left:39px;top:748.46px;width:1503px;height:1px;background:#dcdbe8"></div>
<div class="abs" style="left:39px;top:711.07px;width:1px;height:37.39px;background:#dcdbe8"></div>
<div class="abs" style="left:218px;top:711.07px;width:1px;height:37.39px;background:#dcdbe8"></div>
<div class="abs" style="left:339px;top:711.07px;width:1px;height:37.39px;background:#dcdbe8"></div>
<div class="abs" style="left:449px;top:711.07px;width:1px;height:37.39px;background:#dcdbe8"></div>
<div class="abs" style="left:532px;top:711.07px;width:1px;height:37.39px;background:#dcdbe8"></div>
<div class="abs" style="left:668px;top:711.07px;width:1px;height:37.39px;background:#dcdbe8"></div>
<div class="abs" style="left:755px;top:711.07px;width:1px;height:37.39px;background:#dcdbe8"></div>
<div class="abs" style="left:840px;top:711.07px;width:1px;height:37.39px;background:#dcdbe8"></div>
<div class="abs" style="left:942px;top:711.07px;width:1px;height:37.39px;background:#dcdbe8"></div>
<div class="abs" style="left:1042px;top:711.07px;width:1px;height:37.39px;background:#dcdbe8"></div>
<div class="abs" style="left:1131px;top:711.07px;width:1px;height:37.39px;background:#dcdbe8"></div>
<div class="abs" style="left:1283px;top:711.07px;width:1px;height:37.39px;background:#dcdbe8"></div>
<div class="abs" style="left:1422px;top:711.07px;width:1px;height:37.39px;background:#dcdbe8"></div>
<div class="abs" style="left:1541px;top:711.07px;width:1px;height:37.39px;background:#dcdbe8"></div>
<div class="td lk" style="left:45.9px;top:718.27px">3QU8_HEM_A_500</div>
<div class="td" style="left:224.9px;top:718.27px">100%</div>
<div class="td" style="left:345.9px;top:718.27px">18%</div>
<div class="td" style="left:455.9px;top:718.27px">0.025</div>
<div class="td" style="left:538.9px;top:718.27px">0.998</div>
<div class="td" style="left:674.9px;top:718.27px">1.95</div>
<div class="td" style="left:761.9px;top:718.27px">1.59</div>
<div class="td" style="left:846.9px;top:718.27px">6</div>
<div class="td" style="left:948.9px;top:718.27px">6</div>
<div class="td red" style="left:1048.9px;top:718.27px">18</div>
<div class="td" style="left:1137.9px;top:718.27px">0</div>
<div class="td" style="left:1289.9px;top:718.27px">100%</div>
<div class="td" style="left:1428.9px;top:718.27px">1</div>
<!-- footer -->
<div class="abs" style="left:0;top:768px;width:1581px;height:2px;background:#cdcdcd"></div>
<div class="abs" style="left:0;top:770px;width:1581px;height:70px;background:#f4f4f4"></div>
<div class="ft" style="left:33px;top:811.5px">About</div>
<div class="ft" style="left:343px;top:811.5px">Support</div>
<div class="ft" style="left:809px;top:811.5px">RCSB PDB is hosted</div>
<div class="ft" style="left:1070px;top:811.5px">RCSB PDB is a</div>
<div class="ft" style="left:1331px;top:811.5px">wwPDB Partners</div>
<!-- nav -->
<div id="nav">
  <div class="nv" style="left:40px;top:17px;font-size:22.3px;line-height:30px">RCSB PDB</div>
  <div class="nv" style="left:185px">Deposit<span class="car"></span></div>
  <div class="nv" style="left:284px">Search<span class="car"></span></div>
  <div class="nv" style="left:379px">Visualize<span class="car"></span></div>
  <div class="nv" style="left:488px">Analyze<span class="car"></span></div>
  <div class="nv" style="left:591px">Download<span class="car"></span></div>
  <div class="nv" style="left:708px">Learn<span class="car"></span></div>
  <div class="nv" style="left:793px">About<span class="car"></span></div>
  <div class="nv" style="left:879px">Careers</div>
  <div class="nv" style="left:963px">COVID-19</div>
  <div class="btn" style="left:1268px;width:59px">Help</div>
  <div class="btn" style="left:1339px;width:99px">Contact us</div>
  <div class="btn" style="left:1450px;width:92px">MyPDB<span class="car" style="margin-left:5px"></span></div>
</div>
</div>
<div id="sb"></div>
<svg class="abs" style="left:1584px;top:114px" width="13" height="10" viewBox="0 0 13 10"><path d="M6.5 1.2 L12 9 H1 Z" fill="#8a8a8a" stroke="#8a8a8a" stroke-width="0.8" stroke-linejoin="round"/></svg>
<div class="abs" style="left:1585px;top:498px;width:11px;height:271px;border-radius:5.5px;background:#8a8a8a"></div>
<svg class="abs" style="left:1584px;top:926.5px" width="13" height="10" viewBox="0 0 13 10"><path d="M1 1 H12 L6.5 8.8 Z" fill="#8a8a8a" stroke="#8a8a8a" stroke-width="0.8" stroke-linejoin="round"/></svg>
<div class="abs" style="left:0;top:940px;width:1600px;height:1px;background:#9a9893"></div>
<div class="abs" style="left:0;top:941px;width:1600px;height:59px;background:linear-gradient(90deg,#dcdad4 0%,#dfdcd3 20%,#e6e2d5 35%,#e4e2d8 45%,#d9dee3 57%,#dadfe4 65%,#dfe1e1 76%,#e8e4d8 86%,#ebe6da 100%)"></div>
<!-- weather -->
<svg class="abs" style="left:22px;top:948px" width="40" height="40" viewBox="0 0 40 40"><defs><linearGradient id="cl" x1="0" y1="0" x2="0" y2="1"><stop offset="0" stop-color="#c9d9f6"/><stop offset="0.7" stop-color="#d6e4f8"/><stop offset="1" stop-color="#92b2e4"/></linearGradient></defs><path d="M3 19.6 C7.5 19.4 12.4 16.4 14.6 11.6 L16.6 8 C17.4 13.6 15.4 20.8 8.6 23.4 C6.6 24.2 4.4 22.6 3 19.6 Z" fill="#f0a83a"/><path d="M6.5 35.8 C3.4 35.8 2.4 32.6 3.4 30.6 C4.4 28.6 6.8 27.8 9 28.4 C9.6 22.4 13.8 18 18.6 18 C22.6 18 25.4 20.4 26.4 22.6 C30.6 22.2 33.2 25.8 32.6 29.8 C32.2 33.6 30 35.8 27 35.8 Z" fill="url(#cl)" stroke="#a8c0e8" stroke-width="0.6"/><circle cx="26.6" cy="10.5" r="9.5" fill="#c92a1f"/><path d="M24.6 7.4 L27.4 5.4 H28.6 V15.6 H26.4 V8.2 L24.6 9.4 Z" fill="#fff"/></svg>
<!-- windows -->
<svg class="abs" style="left:399.5px;top:956px" width="29" height="29" viewBox="0 0 29 29"><defs><linearGradient id="wg" x1="0" y1="0" x2="1" y2="1"><stop offset="0" stop-color="#2fb8f0"/><stop offset="1" stop-color="#0a6fd0"/></linearGradient></defs><rect x="0" y="0" width="13.7" height="13.7" rx="1" fill="url(#wg)"/><rect x="15.3" y="0" width="13.7" height="13.7" rx="1" fill="url(#wg)"/><rect x="0" y="15.3" width="13.7" height="13.7" rx="1" fill="url(#wg)"/><rect x="15.3" y="15.3" width="13.7" height="13.7" rx="1" fill="url(#wg)"/></svg>
<!-- search -->
<svg class="abs" style="left:455px;top:955px" width="30" height="30" viewBox="0 0 30 30"><defs><linearGradient id="sg" x1="0" y1="1" x2="1" y2="0"><stop offset="0" stop-color="#0d6fc8"/><stop offset="0.6" stop-color="#1886d0"/><stop offset="1" stop-color="#36c47c"/></linearGradient></defs><circle cx="13" cy="13" r="10.2" fill="none" stroke="url(#sg)" stroke-width="3.2"/><path d="M20.5 20.5 L27.5 27.5" stroke="#0d6fc8" stroke-width="3.4" stroke-linecap="round"/></svg>
<!-- task view -->
<svg class="abs" style="left:510px;top:955px" width="32" height="31" viewBox="0 0 32 31"><rect x="8" y="1" width="22" height="21" rx="1.5" fill="#f4f4f4"/><rect x="1" y="8" width="22" height="21.5" rx="1.5" fill="#1c1c1c"/><rect x="8" y="8" width="15" height="14" fill="#b9b9b9"/></svg>
<!-- copilot -->
<svg class="abs" style="left:565px;top:955px" width="32" height="31" viewBox="0 0 32 31"><defs><linearGradient id="cpA" x1="0" y1="0" x2="0" y2="1"><stop offset="0" stop-color="#1a9af0"/><stop offset="0.45" stop-color="#2bb088"/><stop offset="0.72" stop-color="#a2c22e"/><stop offset="1" stop-color="#f2c60e"/></linearGradient><linearGradient id="cpB" x1="0.2" y1="0" x2="0" y2="1"><stop offset="0" stop-color="#b04ee2"/><stop offset="0.55" stop-color="#ea5090"/><stop offset="1" stop-color="#ff9d58"/></linearGradient></defs><path d="M16 1.2 H20 Q24.2 1.2 24.4 5 L24.6 9.4 H16 Z" fill="#1f4fd2"/><path d="M7 1 H20.6 Q22.2 1 21.6 2.6 L13.4 19.4 Q12.8 20.8 11.2 20.8 H3.2 Q1 20.8 1.2 18.6 L2.5 5.6 Q3 1 7 1 Z" fill="url(#cpA)"/><path d="M8.6 20.2 H16 V27.8 H13.2 Q9.6 27.8 9.1 24 Z" fill="#ea5a2c"/><path d="M19.6 8.6 H28.8 Q31.2 8.6 30.7 11.2 L26.5 26 Q25.9 27.9 24 27.9 H13.8 Q12.6 27.9 13 26.6 L18.1 10 Q18.5 8.6 19.6 8.6 Z" fill="url(#cpB)" stroke="#f4eeea" stroke-width="0.9"/></svg>
<!-- teams -->
<svg class="abs" style="left:619px;top:954px" width="31" height="31" viewBox="0 0 31 31"><defs><linearGradient id="tmT" x1="0" y1="0" x2="1" y2="1"><stop offset="0" stop-color="#5b5fe0"/><stop offset="1" stop-color="#2a2a9e"/></linearGradient><linearGradient id="tmB" x1="0" y1="0" x2="1" y2="1"><stop offset="0" stop-color="#5858d8"/><stop offset="1" stop-color="#8a6cf6"/></linearGradient></defs><circle cx="12.4" cy="4.6" r="4.3" fill="#7f86f0"/><circle cx="24" cy="6.6" r="3.9" fill="#7a80ee"/><path d="M19.4 11.8 H28.4 Q30 11.8 30 13.4 V22 Q30 27.6 24.6 27.6 H20 Z" fill="url(#tmB)"/><path d="M7 11 H21.6 Q23 11 23 12.4 V25 Q23 28.6 19.4 28.6 H11 Q7 28.6 7 24.6 Z" fill="#7c80f2"/><rect x="1" y="12.4" width="14" height="14" rx="3" fill="url(#tmT)"/><path d="M4.4 15.9 H11.6 M8 15.9 V23.4" stroke="#fff" stroke-width="2.1"/></svg>
<!-- explorer -->
<svg class="abs" style="left:675px;top:956px" width="32" height="28" viewBox="0 0 32 28"><path d="M1 2 Q1 0.5 2.5 0.5 H11 L14 3.5 H29.5 Q31 3.5 31 5 V8 H1 Z" fill="#e0a41c"/><rect x="1" y="6" width="30" height="21.5" rx="1" fill="#fbd34e"/><path d="M6 27.5 V21 Q6 18.5 8.5 18.5 H23.5 Q26 18.5 26 21 V27.5 Z" fill="#1a7fd4"/><rect x="10" y="21" width="12" height="2" rx="1" fill="#0c4f9a"/></svg>
<div class="abs" style="left:687px;top:991px;width:7px;height:3px;border-radius:2px;background:#7c7c7c"></div>
<!-- edge -->
<svg class="abs" style="left:731px;top:955px" width="30" height="30" viewBox="0 0 30 30"><defs><linearGradient id="eb" x1="0" y1="0.3" x2="0.8" y2="1"><stop offset="0" stop-color="#2a9ff0"/><stop offset="0.5" stop-color="#1876d8"/><stop offset="1" stop-color="#144e9e"/></linearGradient><linearGradient id="eg2" x1="0" y1="0.2" x2="1" y2="0.7"><stop offset="0" stop-color="#2db6f0"/><stop offset="0.5" stop-color="#2cc0b4"/><stop offset="1" stop-color="#4cd858"/></linearGradient></defs><path d="M27.2 22.4 C25 27 20.5 30 15 30 C6.7 30 0.2 23.3 0.2 15 C0.2 6.7 6.7 0 15 0 C23.3 0 29.8 6 29.8 12.5 C29.8 16 28.6 18.6 27.8 20 Z" fill="url(#eb)"/><path d="M0.4 13 C1.5 5.5 7.5 0 15 0 C23.3 0 29.8 6 29.8 12.5 C29.8 16.8 26.8 19.4 22.6 19.4 C19.2 19.4 17.6 17.6 17.6 15.4 C17.6 12 14.6 9.4 11 9.4 C6 9.4 2.4 11 0.4 13 Z" fill="url(#eg2)"/><path d="M10.9 15.6 C10.9 13.4 12.6 11.9 14.6 11.9 C16.4 11.9 17.9 13.2 17.9 15.2 C17.9 17.8 20 19.5 22.8 19.5 C25 19.5 27.2 19 28.4 18.2 C28.2 19.8 27.8 21.2 27.3 22.4 C23.5 21.6 19.6 21.4 16.6 20.2 C13.2 19 10.9 17.6 10.9 15.6 Z" fill="#e4e3df"/></svg>
<!-- store -->
<svg class="abs" style="left:785px;top:955px" width="31" height="31" viewBox="0 0 31 31"><path d="M7 6 V2.4 Q7 1.2 8.2 1.2 H22.8 Q24 1.2 24 2.4 V6" fill="none" stroke="#3aa0ee" stroke-width="1.6"/><rect x="0.5" y="4.5" width="30" height="26" rx="3" fill="#1b4f9c"/><rect x="9" y="11" width="6" height="6" fill="#f25022"/><rect x="16" y="11" width="6" height="6" fill="#7fba00"/><rect x="9" y="18" width="6" height="6" fill="#00a4ef"/><rect x="16" y="18" width="6" height="6" fill="#ffb900"/></svg>
<!-- amazon -->
<div class="abs" style="left:840.5px;top:955px;width:31px;height:30px;background:#fff"></div>
<svg class="abs" style="left:840.5px;top:955px" width="31" height="30" viewBox="0 0 31 30"><text x="1.5" y="10.5" font-family="Liberation Sans" font-weight="bold" font-size="7.6" fill="#222">amazon</text><path d="M4 12.5 Q15 16 26 12" fill="none" stroke="#f59a1b" stroke-width="1.2"/><path d="M2 17 H7 L10 28 H30 L29 19 H8" fill="none" stroke="#1f6fc0" stroke-width="1.6"/><g stroke="#3a86d0" stroke-width="0.8"><path d="M10 21 H29 M10.5 24 H29.5 M11 27 H30 M12 19 L14 28 M16 19 L18 28 M20 19 L22 28 M24 19 L26 28 M28 19 L30 28"/></g></svg>
<!-- a -->
<div class="abs" style="left:896px;top:955px;width:30px;height:30px;background:#fff"></div>
<svg class="abs" style="left:896px;top:955px" width="30" height="30" viewBox="0 0 30 30"><text x="6.4" y="19.6" font-family="Liberation Sans" font-weight="bold" font-size="22" fill="#8e8e8e">a</text><circle cx="4" cy="25.6" r="1.6" fill="#e52222"/><circle cx="9.5" cy="25.6" r="1.6" fill="#f3a21a"/><circle cx="15" cy="25.6" r="1.6" fill="#2ea84a"/><circle cx="20.5" cy="25.6" r="1.6" fill="#a03bd0"/><circle cx="26" cy="25.6" r="1.6" fill="#2d7be0"/></svg>
<!-- dropbox -->
<svg class="abs" style="left:950px;top:956px" width="31" height="27" viewBox="0 0 31 27"><g fill="#111"><path d="M8 1 L15.5 5.8 L8 10.6 L0.5 5.8 Z"/><path d="M23 1 L30.5 5.8 L23 10.6 L15.5 5.8 Z"/><path d="M8 10.6 L15.5 15.4 L8 20.2 L0.5 15.4 Z"/><path d="M23 10.6 L30.5 15.4 L23 20.2 L15.5 15.4 Z"/><path d="M15.5 16.8 L23 21.6 L15.5 26.4 L8 21.6 Z"/></g></svg>
<!-- spotify -->
<svg class="abs" style="left:1006px;top:955px" width="30" height="30" viewBox="0 0 30 30"><circle cx="15" cy="15" r="14.7" fill="#1ed760"/><g fill="none" stroke="#111" stroke-linecap="round"><path d="M6.5 10.5 Q15 8 23.5 12" stroke-width="2.6"/><path d="M7.5 15 Q15 13 22 16.5" stroke-width="2.2"/><path d="M8.5 19.5 Q15 17.8 20.5 20.5" stroke-width="1.8"/></g></svg>
<div class="abs" style="left:1017.5px;top:991px;width:7px;height:3px;border-radius:2px;background:#7c7c7c"></div>
<!-- chrome active -->
<div class="abs" style="left:1052.5px;top:946.5px;width:46.5px;height:47px;border-radius:4px;background:#efefef;box-shadow:0 1px 1px rgba(0,0,0,0.08)"></div>
<div class="abs" style="left:1066px;top:990px;width:19.5px;height:3.4px;border-radius:2px;background:#0f6cd0"></div>
<svg class="abs" style="left:1061px;top:955px" width="30" height="30" viewBox="0 0 30 30"><path d="M15 15 L2.3 7.7 A14.7 14.7 0 0 1 27.7 7.7 Z" fill="#e33b2e"/><path d="M15 15 L27.7 7.7 A14.7 14.7 0 0 1 15 29.7 Z" fill="#fbc116"/><path d="M15 15 L15 29.7 A14.7 14.7 0 0 1 2.3 7.7 Z" fill="#199a4c"/><circle cx="15" cy="15" r="6.6" fill="#fff"/><circle cx="15" cy="15" r="5.2" fill="#2a79e6"/></svg>
<svg class="abs" style="left:1078px;top:949px" width="20" height="20" viewBox="0 0 20 20"><defs><clipPath id="ta1"><circle cx="10" cy="10" r="9.7"/></clipPath></defs><g clip-path="url(#ta1)"><rect width="20" height="20" fill="#a9a7a3"/><rect width="6" height="20" fill="#d6d4d0"/><ellipse cx="10" cy="6" rx="2" ry="2.2" fill="#3a2e2a"/><path d="M5 20 L5.5 12 Q6 9 9 9 L12 9 Q14.5 9.5 14.5 12 L15 20 Z" fill="#161616"/></g></svg>
<!-- whatsapp -->
<svg class="abs" style="left:1114px;top:953px" width="34" height="34" viewBox="0 0 34 34"><path d="M6.7 24.1 L2.9 31.1 L10.9 27.9 A13.2 13.2 0 1 0 6.7 24.1 Z" fill="none" stroke="#1f8c4a" stroke-width="2.9" stroke-linejoin="round"/><path d="M10.8 11.4 C10.8 16.2 15.2 20.6 22.4 21.2" fill="none" stroke="#1f8c4a" stroke-width="3" stroke-linecap="round"/><circle cx="11" cy="11.2" r="2.3" fill="#1f8c4a"/><circle cx="22.6" cy="21" r="2.3" fill="#1f8c4a"/></svg>
<div class="abs" style="left:1132px;top:948.5px;width:20.4px;height:20.4px;border-radius:50%;background:#1670d4"></div>
<div class="abs" style="left:1132px;top:949.6px;width:20.4px;text-align:center;font-size:14.5px;line-height:18px;color:#fff">9</div>
<div class="abs" style="left:1127.5px;top:991px;width:7px;height:3px;border-radius:2px;background:#7c7c7c"></div>
<!-- chrome 2 -->
<svg class="abs" style="left:1171px;top:955px" width="30" height="30" viewBox="0 0 30 30"><path d="M15 15 L2.3 7.7 A14.7 14.7 0 0 1 27.7 7.7 Z" fill="#e33b2e"/><path d="M15 15 L27.7 7.7 A14.7 14.7 0 0 1 15 29.7 Z" fill="#fbc116"/><path d="M15 15 L15 29.7 A14.7 14.7 0 0 1 2.3 7.7 Z" fill="#199a4c"/><circle cx="15" cy="15" r="6.6" fill="#fff"/><circle cx="15" cy="15" r="5.2" fill="#2a79e6"/></svg>
<svg class="abs" style="left:1187.5px;top:949px" width="20" height="20" viewBox="0 0 20 20"><defs><clipPath id="ta2"><circle cx="10" cy="10" r="9.7"/></clipPath></defs><g clip-path="url(#ta2)"><rect width="20" height="20" fill="#8f9498"/><ellipse cx="10" cy="12" rx="5.5" ry="6.5" fill="#c9b9a8"/><path d="M2 6 Q10 -2 18 6 L18 10 Q10 4 2 10 Z" fill="#6d7276"/></g></svg>
<div class="abs" style="left:1182.5px;top:991px;width:7px;height:3px;border-radius:2px;background:#7c7c7c"></div>
<!-- tray -->
<svg class="abs" style="left:1355px;top:964px" width="15" height="12" viewBox="0 0 15 12"><path d="M1.5 9 L7.5 3 L13.5 9" fill="none" stroke="#1a1a1a" stroke-width="1.5"/></svg>
<svg class="abs" style="left:1391px;top:961px" width="23" height="17" viewBox="0 0 23 17"><g fill="none" stroke="#1a1a1a" stroke-width="1.5" stroke-linecap="round"><path d="M1.5 6 Q11.5 -2.5 21.5 6"/><path d="M4.8 9.2 Q11.5 3.5 18.2 9.2"/><path d="M8 12.2 Q11.5 9.4 15 12.2"/></g><circle cx="11.5" cy="15" r="1.6" fill="#1a1a1a"/></svg>
<svg class="abs" style="left:1421px;top:962px" width="23" height="17" viewBox="0 0 23 17"><path d="M1.5 6 H5 L10 1.5 V15.5 L5 11 H1.5 Z" fill="none" stroke="#1a1a1a" stroke-width="1.4" stroke-linejoin="round"/><path d="M13.5 5.5 Q15.5 8.5 13.5 11.5" fill="none" stroke="#1a1a1a" stroke-width="1.3"/><path d="M16.5 3 Q20 8.5 16.5 14" fill="none" stroke="#9a9a9a" stroke-width="1.2"/></svg>
<svg class="abs" style="left:1451px;top:959px" width="28" height="19" viewBox="0 0 28 19"><rect x="1.6" y="4.4" width="23.2" height="12.4" rx="3" fill="none" stroke="#151311" stroke-width="1.5"/><rect x="25.2" y="8" width="1.8" height="5" rx="0.9" fill="#151311"/><rect x="4.1" y="6.9" width="15" height="7.5" rx="1.2" fill="#178a18"/><path d="M14 0.8 L10.4 7 H13.4 L13 10.6 L16.8 4.2 H13.8 Z" fill="#151311" stroke="#e6e2d8" stroke-width="2.2" stroke-linejoin="round" paint-order="stroke"/></svg>
<div class="abs" style="left:1470px;top:951px;width:106px;text-align:right;font-size:15.5px;line-height:18px;color:#1a1a1a">23:23</div>
<div class="abs" style="left:1470px;top:970.5px;width:106px;text-align:right;font-size:15.5px;line-height:18px;color:#1a1a1a">07/03/2026</div>

</body></html>
